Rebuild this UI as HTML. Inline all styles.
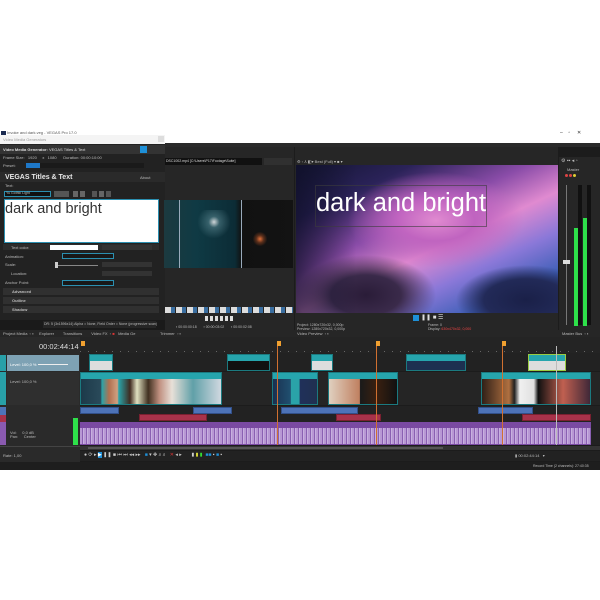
<!DOCTYPE html>
<html><head><meta charset="utf-8"><style>
*{margin:0;padding:0;box-sizing:border-box}
body{width:600px;height:600px;background:#fff;position:relative;overflow:hidden;font-family:"Liberation Sans",sans-serif;color:#ccc}
.a{position:absolute}
.t{position:absolute;font-size:4px;color:#bbb;white-space:nowrap;line-height:1}
.row{position:absolute;left:3px;width:156px;height:6px;background:#2c2c2c}
.clipv{position:absolute;background:#2aa3a8;border:1px solid #1b7a80}
.ch{position:absolute;left:0;right:0;top:0;height:6px;background:#26a5ad}
.ab{position:absolute;height:7px;background:#4d73b8;border:1px solid #32508a}
.ar{position:absolute;height:7px;background:#a8324a;border:1px solid #7a2030}
</style></head><body>
<div class="a" style="left:0;top:130px;width:600px;height:13px;background:#fff"></div>
<div class="a" style="left:1px;top:131px;width:5px;height:4px;background:#1a2a50"></div>
<div class="t" style="left:7px;top:131px;color:#555">Invoke and dark.veg - VEGAS Pro 17.0</div>
<div class="t" style="left:560px;top:131px;color:#333;font-size:5px">–&nbsp;&nbsp;&nbsp;&nbsp;▫&nbsp;&nbsp;&nbsp;&nbsp;&nbsp;✕</div>
<div class="a" style="left:0;top:143px;width:600px;height:327px;background:#1c1c1c"></div>
<div class="a" style="left:0;top:143px;width:600px;height:4px;background:#2a2a2a"></div>
<div class="a" style="left:0;top:135px;width:165px;height:9px;background:#f4f4f4"></div>
<div class="t" style="left:3px;top:138px;color:#999">Video Media Generators</div>
<div class="a" style="left:158px;top:136px;width:6px;height:6px;background:#ddd"></div>
<div class="a" style="left:0;top:144px;width:165px;height:176px;background:#222"></div>
<div class="a" style="left:0;top:145px;width:165px;height:9px;background:#333"></div>
<div class="t" style="left:3px;top:148px;color:#ddd"><b>Video Media Generator:</b> VEGAS Titles &amp; Text</div>
<div class="a" style="left:140px;top:146px;width:7px;height:7px;background:#1e90d8"></div>
<div class="t" style="left:3px;top:156px">Frame Size:&nbsp;&nbsp; 1920&nbsp;&nbsp;&nbsp;&nbsp; x &nbsp;&nbsp;1080&nbsp;&nbsp;&nbsp;&nbsp;&nbsp; Duration: 00:00:10:00</div>
<div class="t" style="left:3px;top:164px">Preset:</div>
<div class="a" style="left:26px;top:163px;width:14px;height:5px;background:#1e78c8"></div>
<div class="a" style="left:40px;top:163px;width:104px;height:5px;background:#1a1a1a"></div>
<div class="a" style="left:0;top:172px;width:165px;height:10px;background:#2a2a2a"></div>
<div class="t" style="left:5px;top:174px;font-size:7px;font-weight:bold;color:#e8e8e8">VEGAS Titles &amp; Text</div>
<div class="t" style="left:140px;top:176px">About</div>
<div class="t" style="left:5px;top:184px">Text:</div>
<div class="a" style="left:4px;top:191px;width:47px;height:6px;background:#111;border:1px solid #2b8fb0"></div>
<div class="t" style="left:6px;top:192px;font-size:3.5px">Yu Gothic Light</div>
<div class="a" style="left:54px;top:191px;width:15px;height:6px;background:#555"></div>
<div class="a" style="left:73px;top:191px;width:5px;height:6px;background:#666"></div>
<div class="a" style="left:80px;top:191px;width:5px;height:6px;background:#666"></div>
<div class="a" style="left:92px;top:191px;width:5px;height:6px;background:#555"></div>
<div class="a" style="left:99px;top:191px;width:5px;height:6px;background:#666"></div>
<div class="a" style="left:106px;top:191px;width:5px;height:6px;background:#555"></div>
<div class="a" style="left:4px;top:199px;width:155px;height:44px;background:#fff;border:1px solid #2b8fb0"></div>
<div class="t" style="left:5px;top:202px;font-size:14.5px;color:#333">dark and bright</div>
<div class="row" style="top:244px"></div>
<div class="t" style="left:11px;top:246px">Text color:</div>
<div class="a" style="left:50px;top:245px;width:48px;height:5px;background:#fff"></div>
<div class="a" style="left:102px;top:245px;width:50px;height:5px;background:#333"></div>
<div class="t" style="left:5px;top:255px">Animation:</div>
<div class="a" style="left:62px;top:253px;width:52px;height:6px;background:#181818;border:1px solid #2b8fb0"></div>
<div class="t" style="left:5px;top:263px">Scale:</div>
<div class="a" style="left:55px;top:265px;width:43px;height:1px;background:#888"></div>
<div class="a" style="left:55px;top:262px;width:3px;height:6px;background:#ccc"></div>
<div class="a" style="left:102px;top:262px;width:50px;height:5px;background:#333"></div>
<div class="t" style="left:11px;top:272px">Location:</div>
<div class="a" style="left:102px;top:271px;width:50px;height:5px;background:#333"></div>
<div class="t" style="left:5px;top:281px">Anchor Point:</div>
<div class="a" style="left:62px;top:280px;width:52px;height:6px;background:#181818;border:1px solid #2b8fb0"></div>
<div class="row" style="top:288px;height:7px;background:#303030"></div>
<div class="t" style="left:12px;top:290px;font-weight:bold">Advanced</div>
<div class="row" style="top:297px;height:7px;background:#303030"></div>
<div class="t" style="left:12px;top:299px;font-weight:bold">Outline</div>
<div class="row" style="top:306px;height:7px;background:#303030"></div>
<div class="t" style="left:12px;top:308px;font-weight:bold">Shadow</div>
<div class="a" style="left:0;top:320px;width:165px;height:10px;background:#1a1a1a"></div>
<div class="a" style="left:43px;top:321px;width:113px;height:7px;background:#262626"></div>
<div class="t" style="left:44px;top:323px;font-size:3.5px">DR: 5 (3x1596x14) Alpha = None, Field Order = None (progressive scan)</div>
<div class="a" style="left:0;top:330px;width:600px;height:7px;background:#262626"></div>
<div class="t" style="left:3px;top:332px">Project Media&nbsp;&nbsp;▫ ▪&nbsp;&nbsp;&nbsp;&nbsp; Explorer&nbsp;&nbsp;&nbsp;&nbsp;&nbsp;&nbsp;&nbsp; Transitions&nbsp;&nbsp;&nbsp;&nbsp;&nbsp;&nbsp;&nbsp; Video FX&nbsp; ▫ <span style="color:#d33">■</span>&nbsp;&nbsp; Media Ge</div>
<div class="t" style="left:160px;top:332px">Trimmer&nbsp; ▫ ▪</div>
<div class="t" style="left:297px;top:332px">Video Preview&nbsp; ▫ ▪</div>
<div class="t" style="left:562px;top:332px">Master Bus&nbsp; ▫ ▪</div>
<div class="a" style="left:165px;top:147px;width:129px;height:183px;background:#262626"></div>
<div class="a" style="left:165px;top:158px;width:97px;height:7px;background:#111"></div>
<div class="t" style="left:166px;top:160px;font-size:3.5px;color:#ddd">DSC1002.mp4 [C:\Users\P17\Footage\Suite]</div>
<div class="a" style="left:264px;top:158px;width:28px;height:7px;background:#303030"></div>
<div class="a" style="left:164px;top:200px;width:129px;height:68px;background:linear-gradient(90deg,#1c3a40 0%,#0f3a44 25%,#0c2c36 55%,#111 60%,#131313 100%)"></div>
<div class="a" style="left:190px;top:210px;width:40px;height:40px;background:radial-gradient(circle at 60% 30%,rgba(255,255,255,.8) 0,rgba(150,200,210,.3) 15%,transparent 45%)"></div>
<div class="a" style="left:250px;top:232px;width:20px;height:14px;background:radial-gradient(circle,#e0703a 0,rgba(200,90,40,.4) 30%,transparent 60%)"></div>
<div class="a" style="left:179px;top:200px;width:1px;height:68px;background:#9ab"></div>
<div class="a" style="left:241px;top:200px;width:1px;height:68px;background:#9ab"></div>
<div class="a" style="left:165px;top:307px;width:128px;height:6px;background:repeating-linear-gradient(90deg,#ddd 0 6px,#3a6ea0 6px 10px,#222 10px 11px)"></div>
<div class="a" style="left:205px;top:316px;width:30px;height:5px;background:repeating-linear-gradient(90deg,#ddd 0 3px,transparent 3px 5px)"></div>
<div class="t" style="left:176px;top:326px;font-size:3.5px">▪ 00:00:00:18&nbsp;&nbsp;&nbsp;&nbsp;&nbsp;&nbsp; ▪ 00:00:03:02&nbsp;&nbsp;&nbsp;&nbsp;&nbsp;&nbsp; ▪ 00:00:02:08</div>
<div class="a" style="left:295px;top:147px;width:263px;height:183px;background:#262626"></div>
<div class="t" style="left:297px;top:160px;font-size:4px">⚙ ▫ ⅄ ◧▾ Best (Full) ▾ ■ ▾</div>
<div class="a" style="left:296px;top:165px;width:262px;height:148px;background:
radial-gradient(ellipse 70px 40px at 70px 130px,#2a1c38 0,#3a2a4a 50%,transparent 100%),
radial-gradient(ellipse 70px 35px at 230px 135px,#1a2048 0,#222a58 60%,transparent 100%),
radial-gradient(ellipse 110px 60px at 140px 55px,#e08ad0 0,#c064c0 35%,transparent 80%),
linear-gradient(155deg,#141633 0%,#2a2258 20%,#8a4ca8 40%,#e08ad0 55%,#8a78d8 70%,#4060b8 85%,#1e2a60 100%)"></div>
<div class="a" style="left:296px;top:165px;width:60px;height:148px;background:linear-gradient(90deg,rgba(15,15,40,.7),transparent)"></div>
<div class="a" style="left:315px;top:185px;width:172px;height:42px;border:1px solid rgba(60,60,60,.6)"></div>
<div class="t" style="left:316px;top:191px;font-size:25.5px;color:#fff">dark and bright</div>
<div class="a" style="left:413px;top:315px;width:6px;height:6px;background:#1e90d8"></div>
<div class="t" style="left:421px;top:315px;font-size:6px;color:#ddd">❚❚ ■ ☰</div>
<div class="t" style="left:297px;top:324px;font-size:3.5px">Project: 1280x720x32, 0,000p<br>Preview: 1280x720x32, 0,000p</div>
<div class="t" style="left:428px;top:324px;font-size:3.5px">Frame: 0<br>Display: <span style="color:#e44">630x470x32, 0,000</span></div>
<div class="a" style="left:559px;top:157px;width:41px;height:173px;background:#262626"></div>
<div class="t" style="left:561px;top:159px;font-size:5px">⚙ ▪▪ ◂ ▫</div>
<div class="t" style="left:567px;top:168px">Master</div>
<div class="a" style="left:565px;top:174px;width:3px;height:3px;border-radius:50%;background:#d44"></div>
<div class="a" style="left:569px;top:174px;width:3px;height:3px;border-radius:50%;background:#d44"></div>
<div class="a" style="left:573px;top:174px;width:3px;height:3px;border-radius:50%;background:#dc3"></div>
<div class="a" style="left:566px;top:185px;width:1px;height:140px;background:#777"></div>
<div class="a" style="left:563px;top:260px;width:7px;height:4px;background:#ddd"></div>
<div class="a" style="left:578px;top:185px;width:4px;height:140px;background:#111"></div>
<div class="a" style="left:587px;top:185px;width:4px;height:140px;background:#111"></div>
<div class="a" style="left:574px;top:228px;width:4px;height:98px;background:#2ee04a"></div>
<div class="a" style="left:583px;top:218px;width:4px;height:108px;background:#2ee04a"></div>
<div class="a" style="left:0;top:337px;width:80px;height:133px;background:#2a2a2a"></div>
<div class="t" style="left:39px;top:343px;font-size:7.5px;color:#ddd">00:02:44:14</div>
<div class="a" style="left:0;top:355px;width:6px;height:16px;background:#28a0a8"></div>
<div class="a" style="left:7px;top:355px;width:72px;height:16px;background:#7ea2b4"></div>
<div class="t" style="left:10px;top:363px;color:#fff">Level: 100,0 %</div>
<div class="a" style="left:38px;top:364px;width:30px;height:1px;background:#eee"></div>
<div class="a" style="left:0;top:372px;width:6px;height:33px;background:#28a0a8"></div>
<div class="a" style="left:7px;top:372px;width:72px;height:33px;background:#2f2f2f"></div>
<div class="t" style="left:10px;top:380px">Level: 100,0 %</div>
<div class="a" style="left:0;top:407px;width:6px;height:8px;background:#4d73b8"></div>
<div class="a" style="left:0;top:415px;width:6px;height:7px;background:#a8324a"></div>
<div class="a" style="left:0;top:422px;width:6px;height:23px;background:#8a5ab0"></div>
<div class="t" style="left:10px;top:431px">Vol:&nbsp;&nbsp;&nbsp;&nbsp; 0,0 dB<br>Pan:&nbsp;&nbsp;&nbsp;&nbsp; Center</div>
<div class="a" style="left:73px;top:418px;width:5px;height:27px;background:#2ee04a"></div>
<div class="a" style="left:0;top:446px;width:80px;height:1px;background:#444"></div>
<div class="t" style="left:3px;top:454px">Rate: 1,00</div>
<div class="a" style="left:80px;top:337px;width:520px;height:16px;background:#242424"></div>
<div class="a" style="left:80px;top:351px;width:520px;height:1px;background:repeating-linear-gradient(90deg,#666 0 1px,transparent 1px 8px)"></div>
<div class="a" style="left:80px;top:353px;width:520px;height:18px;background:#222"></div>
<div class="a" style="left:80px;top:372px;width:520px;height:33px;background:#252525"></div>
<div class="a" style="left:80px;top:406px;width:520px;height:39px;background:#222"></div>
<div class="clipv" style="left:89px;top:354px;width:24px;height:17px;background:#ddd"><div class="ch"></div></div>
<div class="clipv" style="left:227px;top:354px;width:43px;height:17px;background:#111"><div class="ch"></div></div>
<div class="clipv" style="left:311px;top:354px;width:22px;height:17px;background:#ddd"><div class="ch"></div></div>
<div class="clipv" style="left:406px;top:354px;width:60px;height:17px;background:#1d3050"><div class="ch"></div></div>
<div class="clipv" style="left:528px;top:354px;width:38px;height:17px;background:#ddd;border-color:#9c4"><div class="ch"></div></div>
<div class="clipv" style="left:80px;top:372px;width:142px;height:33px;background:linear-gradient(90deg,#1c3a4a 0,#2a4a5a 14%,#2aa3a8 15%,#b07050 20%,#d0a080 26%,#2aa3a8 27%,#402a20 35%,#e0e0c0 40%,#403020 48%,#c09080 56%,#e8e0d8 65%,#60a0a8 80%,#d0d8e0 100%)"><div class="ch"></div></div>
<div class="clipv" style="left:272px;top:372px;width:46px;height:33px;background:linear-gradient(90deg,#1a3050 0,#205070 40%,#2aa3a8 41%,#2aa3a8 60%,#20305a 61%,#203050 100%)"><div class="ch"></div></div>
<div class="clipv" style="left:328px;top:372px;width:70px;height:33px;background:linear-gradient(90deg,#e0d0c0 0,#c08060 45%,#1a1a1a 46%,#3a2010 70%,#111 100%)"><div class="ch"></div></div>
<div class="clipv" style="left:481px;top:372px;width:110px;height:33px;background:linear-gradient(90deg,#302018 0,#b07040 25%,#202020 30%,#f0f0f0 35%,#e0e0e0 48%,#101010 52%,#c06050 75%,#402838 100%)"><div class="ch"></div></div>
<div class="ab" style="left:80px;top:407px;width:39px"></div>
<div class="ab" style="left:193px;top:407px;width:39px"></div>
<div class="ab" style="left:281px;top:407px;width:77px"></div>
<div class="ab" style="left:478px;top:407px;width:55px"></div>
<div class="ar" style="left:139px;top:414px;width:68px"></div>
<div class="ar" style="left:336px;top:414px;width:45px"></div>
<div class="ar" style="left:522px;top:414px;width:69px"></div>
<div class="a" style="left:80px;top:422px;width:511px;height:23px;background:#7a4aa2"></div>
<div class="a" style="left:80px;top:428px;width:511px;height:16px;background:repeating-linear-gradient(90deg,#b898d4 0 2px,#8a60b2 2px 3px,#c8b0e0 3px 4px)"></div>
<div class="a" style="left:81px;top:341px;width:4px;height:5px;background:#f0a030"></div>
<div class="a" style="left:277px;top:341px;width:4px;height:5px;background:#f0a030"></div>
<div class="a" style="left:277px;top:346px;width:1px;height:99px;background:#d07030"></div>
<div class="a" style="left:376px;top:341px;width:4px;height:5px;background:#f0a030"></div>
<div class="a" style="left:376px;top:346px;width:1px;height:99px;background:#d07030"></div>
<div class="a" style="left:502px;top:341px;width:4px;height:5px;background:#f0a030"></div>
<div class="a" style="left:502px;top:346px;width:1px;height:99px;background:#d07030"></div>
<div class="a" style="left:556px;top:346px;width:1px;height:99px;background:#bbb"></div>
<div class="a" style="left:80px;top:446px;width:520px;height:4px;background:#333"></div>
<div class="a" style="left:88px;top:447px;width:355px;height:2px;background:#555"></div>
<div class="a" style="left:80px;top:451px;width:520px;height:10px;background:#222"></div>
<div class="t" style="left:84px;top:453px;font-size:5px;color:#ccc">● ⟳ ▸ <span style="background:#1e90d8;color:#fff">▶</span> ❚❚ ■ ⏮ ⏭ ◂◂ ▸▸&nbsp;&nbsp; <span style="color:#1e90d8">■</span> ▾ ✥ ⌕ ⌕&nbsp;&nbsp; <span style="color:#d33">✕</span> ◂ ▸&nbsp;&nbsp;&nbsp;&nbsp;&nbsp;&nbsp; ▮ <span style="color:#dd3">▮</span> <span style="color:#3d3">▮</span>&nbsp; <span style="color:#1e90d8">■■</span> ▪ <span style="color:#1e90d8">■</span> ▪</div>
<div class="t" style="left:515px;top:454px">▮ 00:02:44:14&nbsp;&nbsp; ▾</div>
<div class="a" style="left:0;top:462px;width:600px;height:8px;background:#1e1e1e"></div>
<div class="t" style="left:533px;top:465px;font-size:3.5px">Record Time (2 channels): 27:40:35</div>
</body></html>
